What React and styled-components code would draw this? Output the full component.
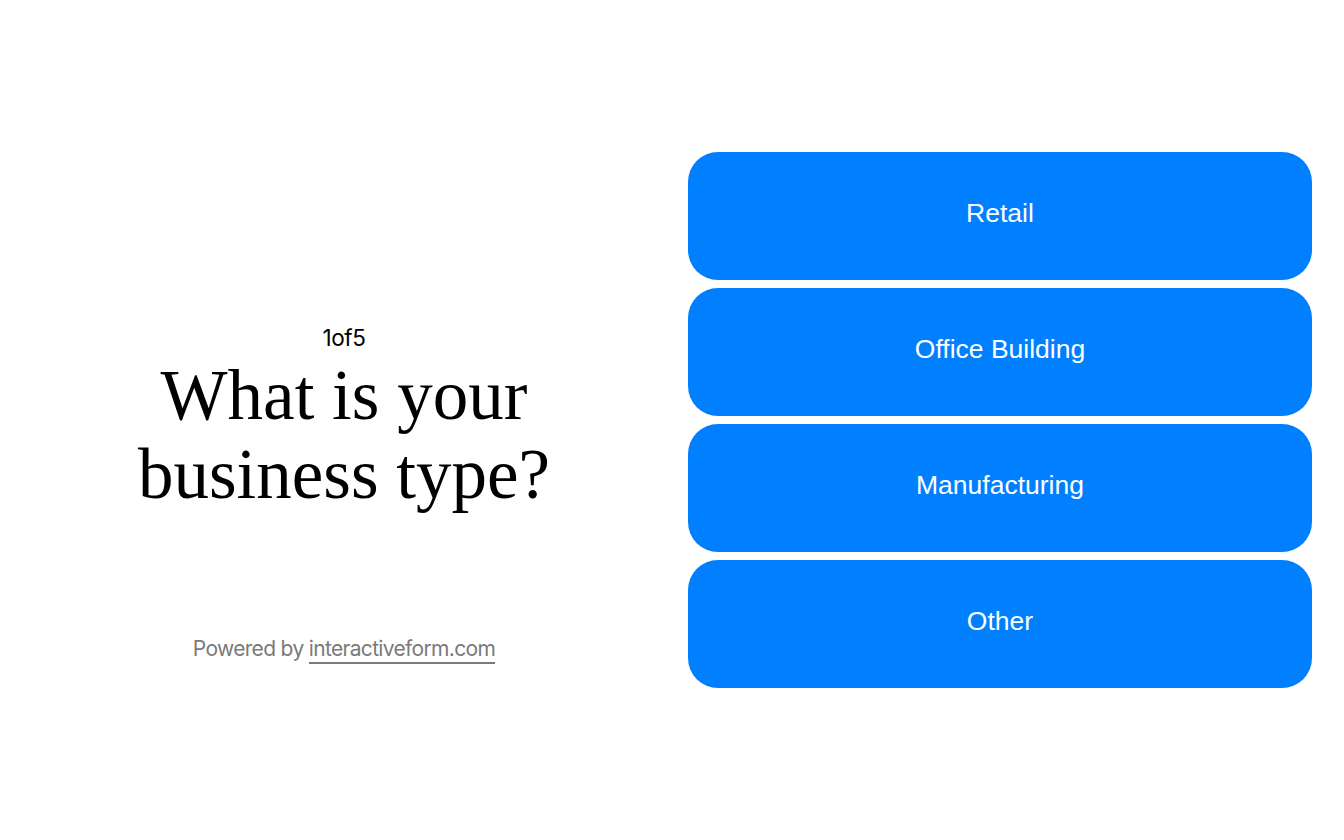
import React, { useState } from "react";
import styled, { createGlobalStyle } from "styled-components";

const GlobalStyle = createGlobalStyle`
  html, body {
    margin: 0;
    padding: 0;
    background: #fff;
  }
  * {
    box-sizing: border-box;
  }
`;

const options = ["Retail", "Office Building", "Manufacturing", "Other"];

const App = () => {
  const [selected, setSelected] = useState(null);

  return (
    <>
      <GlobalStyle />
      <Page>
        <Intro>
          <div />
          <Question>
            <Counter>1of5</Counter>
            <Title>
              What is your
              <br />
              business type?
            </Title>
          </Question>
          <Powered>
            Powered by <a href="#">interactiveform.com</a>
          </Powered>
        </Intro>
        <Choices>
          {options.map((option) => (
            <Choice
              key={option}
              $active={selected === option}
              onClick={() => setSelected(option)}
            >
              {option}
            </Choice>
          ))}
        </Choices>
      </Page>
    </>
  );
};

const Page = styled.div`
  display: flex;
  height: 100vh;
  width: 100%;
`;

const Intro = styled.div`
  width: 688px;
  flex-shrink: 0;
  display: grid;
  grid-template-rows: 1fr auto 1fr;
  justify-items: center;
`;

const Question = styled.div`
  display: flex;
  flex-direction: column;
  align-items: center;
  text-align: center;
`;

const Counter = styled.div`
  font-family: Inter, "Liberation Sans", sans-serif;
  font-size: 22.5px;
  letter-spacing: -0.4px;
  color: #000;
  line-height: 24px;
`;

const Title = styled.h1`
  margin: 6px 0 0;
  font-family: "Liberation Serif", "Times New Roman", serif;
  font-weight: 400;
  font-size: 71px;
  line-height: 79px;
  color: #000;
`;

const Powered = styled.p`
  margin: 122px 0 0;
  font-family: Inter, "Liberation Sans", sans-serif;
  font-size: 21px;
  letter-spacing: -0.67px;
  color: #7a7a7a;
  a {
    color: #7a7a7a;
    text-decoration: none;
    border-bottom: 2px solid #7a7a7a;
    padding-bottom: 1px;
  }
`;

const Choices = styled.div`
  flex: 1;
  display: flex;
  flex-direction: column;
  justify-content: center;
  gap: 8px;
  padding-right: 32px;
`;

const Choice = styled.button`
  height: 128px;
  width: 100%;
  border: none;
  border-radius: 30px;
  padding: 0 0 6px;
  background: ${(p) => (p.$active ? "#0066dd" : "#007fff")};
  color: #fff;
  font-family: "Liberation Sans", Arial, sans-serif;
  font-size: 26.5px;
  cursor: pointer;
`;

export default App;
